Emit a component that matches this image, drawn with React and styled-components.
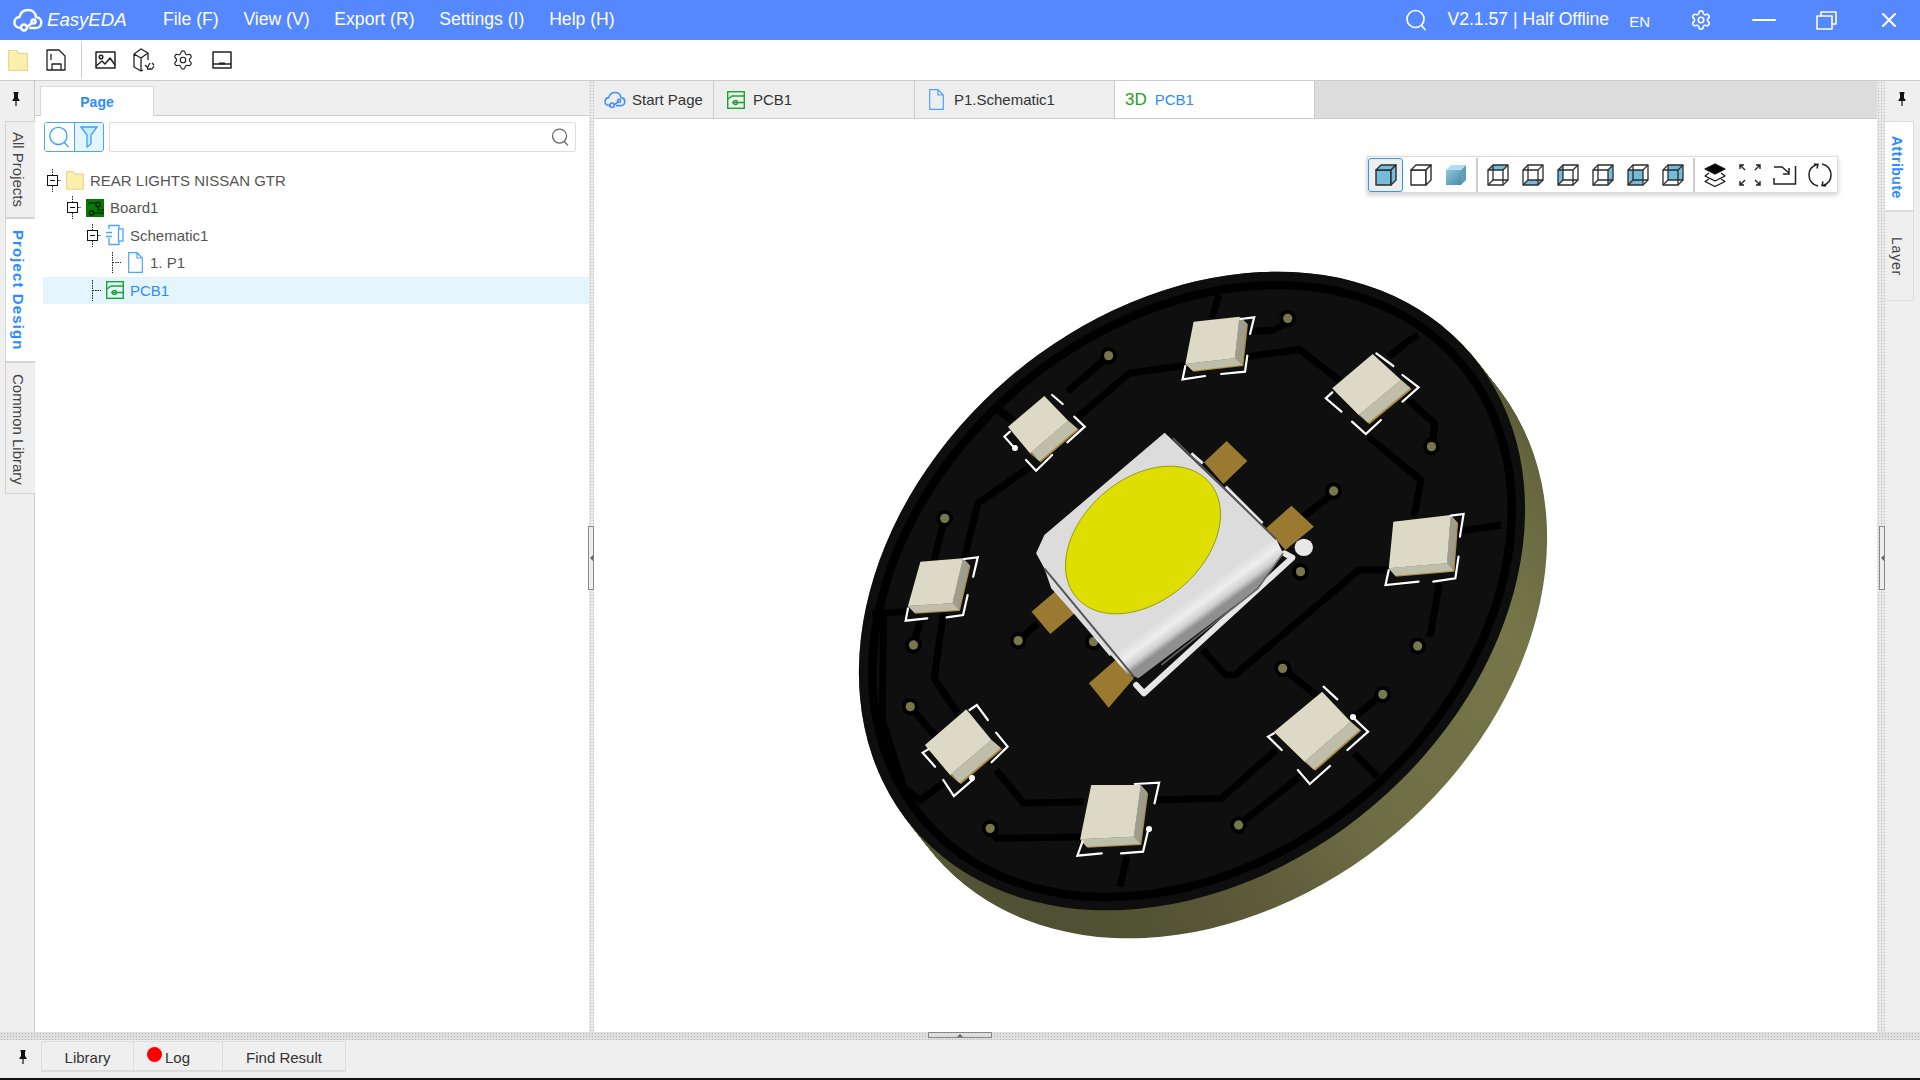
import React from 'react';
import styled, { createGlobalStyle } from 'styled-components';
import { Settings } from 'lucide-react';

const Global = createGlobalStyle`
  html, body { margin: 0; padding: 0; height: 100%; overflow: hidden; background: #fff; }
  body { font-family: "Liberation Sans", Arial, sans-serif; color: #333; }
  #root { height: 100vh; }
  * { box-sizing: border-box; }
  svg { display: block; flex: none; }
`;

const Page = styled.div`display: flex; flex-direction: column; height: 1080px; width: 1920px;`;

const TitleBar = styled.header`display: flex; align-items: center; height: 40px; background: #5588ff; color: #fff; flex: none;`;
const Logo = styled.div`display: flex; align-items: center; gap: 4px; width: 150.5px; padding-left: 13px;`;
const LogoText = styled.span`font-size: 18.6px; font-style: italic;`;
const MenuItem = styled.span`padding: 0 12.4px; font-size: 17.6px; line-height: 40px; position: relative; top: -1px;`;
const TitleRight = styled.div`margin-left: auto; display: flex; align-items: center;`;
const Version = styled.span`font-size: 17.6px; margin: 0 20px 0 20px; position: relative; top: -1px;`;
const Lang = styled.span`font-size: 15px; margin-right: 20px; position: relative; top: 1px;`;
const WinCell = styled.div`width: 62.5px; height: 40px; display: flex; align-items: center; justify-content: center;`;

const ToolBar = styled.div`display: flex; align-items: center; height: 41px; background: #fff; border-bottom: 1px solid #ccc; flex: none; padding-left: 8px;`;
const ToolButton = styled.div`width: ${p => p.$w || 39}px; flex: none; display: flex; justify-content: center; margin-left: ${p => p.$ml || 0}px; margin-right: ${p => p.$mr || 0}px;`;
const ToolSep = styled.div`width: 1px; height: 36px; background: #ccc; flex: none;`;

const Workspace = styled.div`flex: 1; display: flex; min-height: 0;`;
const Rail = styled.aside`width: 35px; flex: none; background: #efefef; display: flex; flex-direction: column; border-right: 1px solid #ccc;`;
const RightRailBox = styled.aside`width: 35px; flex: none; background: #efefef; display: flex; flex-direction: column;`;
const PinCell = styled.div`height: 40px; display: flex; align-items: center; justify-content: center; padding-right: ${p => p.$pr || 0}px; padding-bottom: 5px; flex: none;`;
const SideTab = styled.div`
  writing-mode: vertical-rl; height: ${p => p.$h}px; padding-top: ${p => p.$pt}px; padding-right: 4px; font-size: 15px; line-height: 25px;
  margin-left: 5px; margin-right: -1px; width: 31px; flex: none; white-space: nowrap;
  background: ${p => (p.$active ? '#fff' : '#efefef')};
  color: ${p => (p.$active ? '#2a8cff' : '#444')};
  font-weight: ${p => (p.$active ? 700 : 400)};
  letter-spacing: ${p => p.$ls || 0}px;
  border: 1px solid #d4d4d4; border-right: ${p => (p.$active ? '1px solid #fff' : '1px solid #ccc')};
`;
const RightTab = styled.div`
  writing-mode: vertical-rl; height: ${p => p.$h}px; padding-top: ${p => p.$pt}px; padding-right: 4px; width: 29px; font-size: 14px; line-height: 24px; flex: none;
  background: ${p => (p.$active ? '#fff' : '#efefef')};
  color: ${p => (p.$active ? '#2a8cff' : '#444')};
  font-weight: ${p => (p.$active ? 700 : 400)};
  letter-spacing: ${p => p.$ls || 0}px;
  border-right: 1px solid #ddd; border-bottom: 1px solid #ddd; border-top: 1px solid #ddd; white-space: nowrap;
`;

const Panel = styled.section`width: 554px; flex: none; background: #fff; display: flex; flex-direction: column;`;
const PanelTabs = styled.div`height: 35px; background: #efefef; border-bottom: 1px solid #ccc; padding: 5px 0 0 5px; display: flex;`;
const PanelTab = styled.div`width: 114px; height: 30px; background: #fff; border: 1px solid #d8d8d8; border-bottom: none; color: #2a8cff; font-weight: 700; font-size: 14px; display: flex; align-items: center; justify-content: center;`;
const SearchRow = styled.div`display: flex; gap: 5px; padding: 6px 13px 0 9px; height: 36px;`;
const ButtonGroup = styled.div`display: flex; width: 60px; height: 30px; border: 1px solid #48a4ff; border-radius: 3px; overflow: hidden; flex: none;`;
const GroupBtn = styled.div`flex: 1; display: flex; align-items: center; justify-content: center; background: ${p => (p.$on ? '#e5f5fe' : '#fff')}; & + & { border-left: 1px solid #48a4ff; }`;
const SearchInput = styled.div`flex: 1; height: 30px; border: 1px solid #ddd; border-radius: 2px; display: flex; align-items: center; justify-content: flex-end; padding-right: 6px;`;
const Tree = styled.div`margin: 14.5px 0 0 8px;`;
const Row = styled.div`
  height: 27.5px; display: flex; align-items: center; padding-left: ${p => p.$level * 20}px; font-size: 15px;
  background: ${p => (p.$sel ? '#e5f5fe' : 'transparent')}; color: ${p => (p.$sel ? '#2a8cff' : '#555')};
`;
const RowIcon = styled.span`margin: 0 6px 0 5px; width: 18px; display: flex; justify-content: center;`;

const VSplit = styled.div`
  width: ${p => p.$w}px; flex: none; position: relative; background-color: #e8e8e8;
  background-image: radial-gradient(#bdbdbd 0.8px, transparent 0.9px); background-size: 3px 3px;
`;
const VHandle = styled.div`position: absolute; left: ${p => p.$l}px; top: 445px; width: 6px; height: 64px; background: #eee; border: 1px solid #888; display: flex; align-items: center; justify-content: center;
  &::after { content: ''; border: 3px solid transparent; border-right-color: #666; margin-left: -3px; }`;

const Main = styled.main`flex: 1; display: flex; flex-direction: column; min-width: 0;`;
const DocTabs = styled.div`height: 38px; background: #dcdcdc; border-bottom: 1px solid #ccc; display: flex; flex: none;`;
const DocTab = styled.div`
  width: ${p => p.$w}px; display: flex; align-items: center; gap: ${p => p.$gap || 8}px; padding-left: ${p => p.$pl || 10}px; font-size: 15px;
  background: ${p => (p.$active ? '#fff' : '#eee')}; color: ${p => (p.$active ? '#2a8cff' : '#333')};
  border-right: 1px solid #ccc; height: 37px;
`;
const Green3D = styled.span`color: #19a619; font-size: 17px;`;
const Canvas = styled.div`flex: 1; position: relative; background: #fff; min-height: 0;`;
const ViewSvg = styled.svg`width: 100%; height: 100%;`;
const ViewBar = styled.div`
  position: absolute; left: 773px; top: 37px; height: 37px; display: flex; align-items: stretch; background: #fff; padding: 1px 0 0 0;
  border: 1px solid #ddd; box-shadow: 0 2px 5px rgba(0,0,0,.2);
`;
const ViewBtn = styled.div`width: 35px; display: flex; align-items: center; justify-content: center; border-radius: 3px;
  ${p => p.$active ? 'background:#eee; border:1px solid #2a96ff;' : ''}`;
const ViewSep = styled.div`width: 2px; background: #ccc; margin: 0 2.5px;`;

const HSplit = styled.div`
  height: 8px; flex: none; position: relative; background-color: #dedede;
  background-image: radial-gradient(#b8b8b8 0.8px, transparent 0.9px); background-size: 3px 3px;
`;
const HHandle = styled.div`position: absolute; left: 928px; top: 0; width: 64px; height: 6px; background: #ddd; border: 1px solid #888; display: flex; justify-content: center;
  &::after { content: ''; border: 3px solid transparent; border-bottom-color: #666; margin-top: -3px; }`;
const BottomBar = styled.footer`height: 38px; background: #efefef; flex: none; display: flex; align-items: flex-start;`;
const BottomPin = styled.div`width: 41px; height: 32px; padding: 2px 0 0 5px; display: flex; align-items: center; justify-content: center;`;
const BottomTabs = styled.div`display: flex; height: 31px; margin-top: 1px; border: 1px solid #ddd; border-bottom: 2px solid #ddd;`;
const BottomTab = styled.div`width: ${p => p.$w}px; display: flex; align-items: center; justify-content: ${p => p.$start ? 'flex-start' : 'center'}; gap: 3px; padding: 2px 0 0 ${p => p.$start ? 13 : 0}px; font-size: 15px; color: #333; & + & { border-left: 1px solid #ddd; }`;
const RedDot = styled.span`width: 15px; height: 15px; border-radius: 50%; background: #ff0000; margin-top: -5px;`;
const BlackEdge = styled.div`height: 2px; background: #111; flex: none;`;

/* ---------- icons ---------- */
const CloudLogo = ({ c = '#fff', s = 30, w = 2.4 }) => (
  <svg width={s} height={s * 0.8} viewBox="0 0 30 24" fill="none" stroke={c} strokeWidth={w} strokeLinecap="round">
    <path d="M8 20C3 20 1 17 1.5 13.5 2 10.5 4.5 9 6.5 9 7.5 4.5 11 2 15 2c4.5 0 7.5 3 8 7 3.5.3 5.5 3 5.3 6-.3 3.4-3 5-6 5h-5" />
    <circle cx="11" cy="19.5" r="3" />
    <path d="M14 19l5-4" />
    <circle cx="20.5" cy="13.5" r="2" />
  </svg>
);
const Pin = () => (
  <svg width="10" height="14" viewBox="0 0 10 14" fill="#111">
    <path d="M2.5 0h5v1L7 2v4l1.5 2v1h-7V8L3 6V2l-.5-1z" />
    <rect x="4.4" y="9" width="1.2" height="5" />
  </svg>
);
const Mag = ({ s = 18, c = '#666', w = 1.4 }) => (
  <svg width={s} height={s} viewBox="0 0 20 20" fill="none" stroke={c} strokeWidth={w} strokeLinecap="round">
    <circle cx="9.5" cy="9" r="7.8" />
    <path d="M14.8 15l3.7 4" />
  </svg>
);
const Funnel = () => (
  <svg width="18" height="22" viewBox="0 0 18 22" fill="none" stroke="#3aa0ff" strokeWidth="1.3">
    <path d="M1 1h16l-6 8v9l-4 3V9z" fill="#c9ecfd" />
  </svg>
);
const FolderIcon = ({ w = 20, h = 22 }) => (
  <svg width={w} height={h} viewBox="0 0 20 22">
    <path d="M.7 1.5h7l2.5 3H19.3v16.8H.7z" fill="#fdf0ac" stroke="#e6d68e" strokeWidth="1.2" />
  </svg>
);
const BoardIcon = () => (
  <svg width="18" height="18" viewBox="0 0 18 18" fill="none">
    <rect width="18" height="18" fill="#037803" />
    <g stroke="#0c0c0c" strokeWidth="1.1">
      <circle cx="12" cy="5.5" r="2.2" />
      <circle cx="5.5" cy="14" r="2.2" />
      <path d="M2 4h8M8 14h10M12 8v3l6 0" />
    </g>
  </svg>
);
const SchemIcon = () => (
  <svg width="18" height="22" viewBox="0 0 18 22" fill="none" stroke="#4aa3ff" strokeWidth="1.3">
    <path d="M3 5V1.5h10V5M3 14v6.5h10V17" />
    <rect x="12.5" y="5" width="4.5" height="12" />
    <path d="M0 8.5h6M0 12.5h6" />
  </svg>
);
const FileIcon = ({ w = 15, h = 21 }) => (
  <svg width={w} height={h} viewBox="0 0 15 21" fill="none" stroke="#4aa3ff" strokeWidth="1.2">
    <path d="M.7.7H9L14.3 6v14.3H.7zM9 .7V6h5.3" />
  </svg>
);
const PcbIcon = ({ s = 18 }) => (
  <svg width={s} height={s} viewBox="0 0 18 18" fill="none" stroke="#1aa531" strokeWidth="1.4">
    <rect x=".7" y=".7" width="16.6" height="16.6" />
    <path d="M1 8l4-3h12M5 11.5h13" />
    <circle cx="8.5" cy="11.5" r="2" />
  </svg>
);
const Toggle = ({ leaf }) => (
  <svg width="18" height="27" viewBox="0 0 18 27" fill="none">
    {leaf ? (
      <path d="M9.5 3v21M9.5 13.5h10" stroke="#222" strokeDasharray="1.5 1" />
    ) : (
      <g>
        <path d="M9.5 2v6M9.5 19v6M15 13.5h4" stroke="#222" strokeDasharray="1.5 1" />
        <rect x="4.5" y="8.5" width="10" height="10" stroke="#111" fill="#fff" />
        <path d="M7 13.5h5" stroke="#111" />
      </g>
    )}
  </svg>
);

const WHITE = { fill: 'none', stroke: '#fff', strokeLinecap: 'round', strokeLinejoin: 'round' };
const TitleSearch = () => (
  <svg width="22" height="22" viewBox="0 0 22 22" {...WHITE} strokeWidth="1.7"><circle cx="10.5" cy="10" r="8.5" /><path d="M16.5 16.5l3.5 4" /></svg>
);
const Minimize = () => <svg width="24" height="4" viewBox="0 0 24 4" {...WHITE} strokeWidth="2"><path d="M1 2h22" /></svg>;
const Restore = () => (
  <svg width="21" height="19" viewBox="0 0 21 19" {...WHITE} strokeWidth="1.6"><rect x="1" y="5" width="15" height="13" /><path d="M5 5V1h15v12h-4" /></svg>
);
const Close = () => <svg width="16" height="16" viewBox="0 0 16 16" {...WHITE} strokeWidth="2"><path d="M2 2l12 12M14 2L2 14" /></svg>;

const DARK = { fill: 'none', stroke: '#222', strokeWidth: 1.3, strokeLinejoin: 'round' };
const SaveIcon = () => (
  <svg width="20" height="22" viewBox="0 0 20 22" {...DARK}><path d="M1 1h12l6 6v14H1zM6 21v-6h9v6M5 5v6" /></svg>
);
const ImageIcon = () => (
  <svg width="21" height="18" viewBox="0 0 21 18" {...DARK} strokeWidth="1.5"><rect x="1" y="1" width="19" height="16" /><circle cx="6" cy="6" r="1.8" /><path d="M1 15l6-5 3 3 5-6 5 7" /></svg>
);
const CubeSwap = () => (
  <svg width="22" height="24" viewBox="0 0 22 24" {...DARK}><path d="M1 6l7-5 7 4v7M1 6v13l7 4v-13M1 6l7 4 7-5M8 23l2-1" /><path d="M12 17l2.5 2.5L17 15M21 17l-2-2M14 21h5l2-3" /></svg>
);
const PanelIcon = () => (
  <svg width="20" height="18" viewBox="0 0 20 18" {...DARK} strokeWidth="1.5"><rect x="1" y="1" width="18" height="16" /><path d="M1 13h18" /><path d="M7 12.5h6" strokeWidth="2" /></svg>
);
const YellowFolder = () => (
  <svg width="20" height="22" viewBox="0 0 20 22"><path d="M.7 1.5h8l2 3h8.6v16.8H.7z" fill="#fdf0ac" stroke="#e6d68e" strokeWidth="1.2" /></svg>
);

const FACES = {
  front: '1,6 16,6 16,21 1,21',
  back: '6,1 21,1 21,16 6,16',
  top: '1,6 6,1 21,1 16,6',
  bottom: '1,21 6,16 21,16 16,21',
  left: '1,6 6,1 6,16 1,21',
  right: '16,6 21,1 21,16 16,21',
};
const BLUE = '#74bcdc';
const CubeWire = ({ face }) => (
  <svg width="22" height="22" viewBox="0 0 22 22" fill="none" stroke="#2c2c2c" strokeWidth="1.3" strokeLinejoin="round">
    <polygon points={FACES[face]} fill={BLUE} stroke="none" />
    <polygon points={FACES.back} />
    <polygon points={FACES.front} />
    <path d="M1 6l5-5M16 6l5-5M1 21l5-5M16 21l5-5" />
  </svg>
);
const CubeSolid = ({ filled }) => (
  <svg width="22" height="22" viewBox="0 0 22 22" fill={filled ? BLUE : '#fff'} stroke="#2c2c2c" strokeWidth="1.4" strokeLinejoin="round">
    <polygon points={FACES.front} />
    <polygon points={FACES.top} />
    <polygon points={FACES.right} />
  </svg>
);
const CubeShaded = () => (
  <svg width="22" height="22" viewBox="0 0 22 22">
    <defs>
      <linearGradient id="cubeFront" x1="0" y1="0" x2="1" y2="1"><stop offset="0" stopColor="#8ccae0" /><stop offset="1" stopColor="#4e87a3" /></linearGradient>
    </defs>
    <polygon points={FACES.front} fill="url(#cubeFront)" />
    <polygon points={FACES.top} fill="#b4def0" />
    <polygon points={FACES.right} fill="#5f9db8" />
  </svg>
);
const LayersIcon = () => (
  <svg width="24" height="24" viewBox="0 0 24 24" fill="none" stroke="#111" strokeWidth="1.2" strokeLinejoin="round">
    <path d="M12 1l10 5-10 5L2 6z" fill="#000" />
    <path d="M6 10l-4 3 10 5 10-5-4-3" />
    <path d="M6 16l-4 2.5 10 5 10-5L18 16" />
  </svg>
);
const FullIcon = () => (
  <svg width="22" height="22" viewBox="0 0 22 22" fill="none" stroke="#222" strokeWidth="1.4">
    <path d="M1 5V1h4M1 1l5 5M21 5V1h-4M21 1l-5 5M1 17v4h4M1 21l5-5M21 17v4h-4M21 21l-5-5" />
  </svg>
);
const FitIcon = () => (
  <svg width="24" height="20" viewBox="0 0 24 20" fill="none" stroke="#222" strokeWidth="1.5">
    <path d="M1 2h8l7 6M16 3v6h-6M22.5 1v18H1v-6" />
  </svg>
);
const RotateIcon = () => (
  <svg width="24" height="24" viewBox="0 0 24 24" fill="none" stroke="#222" strokeWidth="1.5">
    <path d="M10 23C4 22 1 17 1 12S4 3 9 1.5M6 1l4 .5-1 4M14 1c6 1 9 6 9 11s-3 9-8 10.5M18 23l-4-.5 1-4" />
  </svg>
);

/* ---------- 3D board ---------- */
const CX = 1192, CY = 591, RX = 366, RY = 281, TILT = -40.3;
const SWEEP = Array.from({ length: 31 }, (_, i) => (30 - i) / 30);

const Disc = ({ x = CX, y = CY, rx = RX, ry = RY, ...rest }) => (
  <ellipse cx={x} cy={y} rx={rx} ry={ry} transform={`rotate(${TILT} ${x} ${y})`} {...rest} />
);

const TR = { fill: 'none', stroke: '#000', strokeLinejoin: 'round', vectorEffect: 'non-scaling-stroke' };
const Trace = ({ d, w = 7 }) => <path d={d} {...TR} strokeWidth={w} />;
const Via = ({ x, y }) => (
  <g>
    <ellipse cx={x} cy={y} rx="18" ry="26" fill="#000" />
    <ellipse cx={x} cy={y} rx="10" ry="14" fill="#77774c" />
  </g>
);
const P = (pts) => pts.map(([x, y]) => `${x},${y}`).join(' ');
const Led = ({ t, e, silk, diag }) => {
  const [, b, c, d] = t;
  const o = (p, k = 1) => [p[0] + e[0] * k, p[1] + e[1] * k];
  return (
    <g>
      <polygon points={P([b, o(b, 1.15), o(c, 1.15), o(d, 1.15), d, c])} fill="#a58a3c" />
      <polygon points={P([b, c, o(c), o(b)])} fill={diag ? '#bfbeaa' : '#9d9c8d'} />
      <polygon points={P([c, d, o(d), o(c)])} fill={diag ? '#8e7d3d' : '#bfbeaa'} />
      <polygon points={P(t)} fill="#dcd9c6" />
      {silk.map((s, i) => (
        <polyline key={i} points={P(s)} fill="none" stroke="#fff" strokeWidth="2.2" strokeLinecap="round" vectorEffect="non-scaling-stroke" />
      ))}
    </g>
  );
};

const LEDS_UP = [
  { t: [[770, 185], [870, 170], [860, 295], [752, 312]], e: [16, 20], silk: [[[872, 177], [902, 172], [893, 222]], [[752, 318], [746, 358], [795, 348]], [[830, 342], [882, 335], [887, 287]]] },
  { diag: true, t: [[1160, 282], [1222, 360], [1130, 465], [1072, 385]], e: [20, 24], silk: [[[1168, 280], [1205, 318]], [[1225, 345], [1260, 382], [1225, 425]], [[1115, 485], [1145, 522], [1178, 480]], [[1072, 397], [1058, 415], [1092, 455]]] },
  { diag: true, t: [[445, 408], [497, 482], [414, 580], [366, 500]], e: [20, 24], silk: [[[462, 405], [485, 432]], [[510, 470], [533, 500], [495, 547]], [[405, 600], [427, 632], [462, 585]], [[370, 515], [358, 530], [382, 567]]] },
  { t: [[1205, 785], [1330, 765], [1322, 910], [1195, 925]], e: [14, 22], silk: [[[1330, 767], [1358, 762], [1350, 830]], [[1195, 930], [1188, 975], [1260, 965]], [[1292, 965], [1340, 955], [1347, 890]]] },
  { t: [[175, 905], [268, 895], [245, 1030], [148, 1038]], e: [14, 20], silk: [[[270, 897], [300, 892], [290, 950]], [[148, 1045], [143, 1082], [190, 1075]], [[232, 1072], [268, 1065], [278, 1005]]] },
];
const LEDS_LOW = [
  { diag: true, t: [[275, 388], [330, 480], [240, 585], [185, 495]], e: [20, 24], silk: [[[282, 390], [298, 375], [322, 420]], [[340, 458], [365, 500], [330, 547]], [[225, 600], [248, 648], [290, 598]], [[192, 508], [180, 518], [207, 560]]] },
  { t: [[547, 615], [655, 615], [640, 770], [523, 778]], e: [14, 22], silk: [[[642, 612], [695, 608], [685, 670]], [[528, 785], [517, 827], [570, 820]], [[612, 820], [660, 815], [672, 745]]] },
  { diag: true, t: [[1050, 335], [1112, 425], [1012, 545], [945, 455]], e: [20, 24], silk: [[[1053, 320], [1083, 358]], [[1115, 410], [1150, 455], [1105, 510]], [[997, 570], [1023, 612], [1067, 558]], [[945, 460], [932, 470], [962, 510]]] },
];

const Board = () => (
  <ViewSvg viewBox="594 119 1283 913" preserveAspectRatio="none">
    <defs>
      <linearGradient id="edge" gradientUnits="userSpaceOnUse" x1="1540" y1="470" x2="980" y2="880">
        <stop offset="0" stopColor="#4f4f33" />
        <stop offset=".22" stopColor="#67673f" />
        <stop offset=".45" stopColor="#76764a" />
        <stop offset=".75" stopColor="#6f6f46" />
        <stop offset="1" stopColor="#4f4f33" />
      </linearGradient>
      <linearGradient id="chip" gradientUnits="userSpaceOnUse" x1="1090" y1="470" x2="1245" y2="625">
        <stop offset="0" stopColor="#dcdcdc" />
        <stop offset=".7" stopColor="#dcdcdc" />
        <stop offset=".83" stopColor="#eeeeee" />
        <stop offset=".93" stopColor="#cfcfcf" />
        <stop offset="1" stopColor="#8f8f8f" />
      </linearGradient>
    </defs>
    {SWEEP.map(k => <Disc key={k} x={CX + 22 * k} y={CY + 28 * k} fill="url(#edge)" />)}
    <Disc fill="#0e0e0e" />
    <Disc rx={RX - 13.5} ry={RY - 13.5} fill="#0f0f0f" stroke="#000" strokeWidth="8.5" />

    <g transform="translate(840 260) scale(0.4592 0.33333)">
      <Trace d="M510 480L630 340L1000 268L1110 385" />
      <Trace d="M1150 530L1265 660L1250 770" />
      <Trace d="M415 620L300 730L270 900" />
      <Trace d="M825 105L810 175" />
      <Trace d="M970 190L945 210L890 215" />
      <Trace d="M575 300L495 395" />
      <Trace d="M1260 225L1240 240L1195 290" />
      <Trace d="M1230 410L1295 490L1290 555" />
      <Trace d="M345 450L385 490" w={8} />
      <Trace d="M1065 710L1000 780" />
      <Trace d="M225 790L205 900" />
      <Trace d="M1340 815L1440 795" />
      <Trace d="M1195 930L1130 930L860 1245L840 1245L790 1170" />
      <Via x="975" y="175" /><Via x="585" y="287" /><Via x="1288" y="560" /><Via x="1075" y="693" /><Via x="228" y="775" /><Via x="1003" y="935" />
      <g transform="translate(0 960)">
        <Trace d="M1305 10L1285 170" />
        <Trace d="M70 100L150 95" />
        <Trace d="M225 100L205 295L330 550" />
        <Trace d="M340 570L400 670L530 665" />
        <Trace d="M690 660L830 655L950 510" />
        <Trace d="M964 265L1060 370" />
        <Trace d="M1182 343L1120 410" />
        <Trace d="M868 735L1010 580" />
        <Trace d="M327 745L340 775L525 770" />
        <Trace d="M153 380L215 480" />
        <Trace d="M160 195L175 120" />
        <Trace d="M388 182L430 130" />
        <Trace d="M1120 520L1170 590" />
        <Trace d="M625 830L610 920" />
        <Trace d="M225 610L175 660L140 625L92 420L95 100" />
        <Via x="160" y="195" /><Via x="388" y="182" /><Via x="552" y="185" /><Via x="1258" y="198" /><Via x="964" y="265" /><Via x="1182" y="343" /><Via x="153" y="380" /><Via x="868" y="735" /><Via x="327" y="745" />
      </g>

      <polygon points="842,543 887,603 835,672 793,607" fill="#997a30" />
      <polygon points="983,737 1032,800 970,870 928,805" fill="#997a30" />
      <polygon points="468,995 515,1055 458,1122 417,1055" fill="#997a30" />
      <polygon points="600,1200 640,1255 585,1343 542,1270" fill="#997a30" />

      <polyline points="765,580 790,610" fill="none" stroke="#e8e8e8" strokeWidth="3" vectorEffect="non-scaling-stroke" />
      <polyline points="840,680 920,790" fill="none" stroke="#e8e8e8" strokeWidth="3" vectorEffect="non-scaling-stroke" />
      <polyline points="520,1070 590,1185" fill="none" stroke="#e8e8e8" strokeWidth="3" vectorEffect="non-scaling-stroke" />
      <polyline points="968,880 985,893 662,1300 645,1275" fill="none" stroke="#e6e6e6" strokeWidth="6" strokeLinejoin="round" strokeLinecap="round" vectorEffect="non-scaling-stroke" />
      <ellipse cx="1010" cy="862" rx="20" ry="26" fill="#e8e8e8" />

      <polygon points="707,518 950,838 965,880 910,985 650,1255 625,1240 460,985 445,925 427,880 445,825" fill="url(#chip)" />
      <polyline points="725,535 950,838" fill="none" stroke="#555" strokeWidth="2" vectorEffect="non-scaling-stroke" />
      <polyline points="445,925 640,1250" fill="none" stroke="#555" strokeWidth="2" vectorEffect="non-scaling-stroke" />
      <polyline points="965,880 910,985 700,1215" fill="none" stroke="#666" strokeWidth="1.6" vectorEffect="non-scaling-stroke" />
    </g>

    <ellipse cx="1143" cy="540" rx="88" ry="61" transform="rotate(-41 1143 540)" fill="#dede00" stroke="#8f8f10" strokeWidth=".8" />

    <g transform="translate(840 260) scale(0.4592 0.33333)">
      {LEDS_UP.map((l, i) => <Led key={i} {...l} />)}
      <g transform="translate(0 960)">
        {LEDS_LOW.map((l, i) => <Led key={i} {...l} />)}
      </g>
    </g>
    <circle cx="1015" cy="448" r="3" fill="#fff" />
    <circle cx="972" cy="778" r="3" fill="#fff" />
    <circle cx="1149" cy="829" r="3" fill="#fff" />
    <circle cx="1353" cy="717" r="3" fill="#fff" />
  </ViewSvg>
);

const WIRE_FACES = ['top', 'bottom', 'left', 'right', 'front', 'back'];

export default function App() {
  return (
    <Page>
      <Global />
      <TitleBar>
        <Logo><CloudLogo /><LogoText>EasyEDA</LogoText></Logo>
        {['File (F)', 'View (V)', 'Export (R)', 'Settings (I)', 'Help (H)'].map(m => <MenuItem key={m}>{m}</MenuItem>)}
        <TitleRight>
          <TitleSearch />
          <Version>V2.1.57 | Half Offline</Version>
          <Lang>EN</Lang>
          <WinCell><Settings size={22} strokeWidth={1.7} /></WinCell>
          <WinCell><Minimize /></WinCell>
          <WinCell><Restore /></WinCell>
          <WinCell><Close /></WinCell>
        </TitleRight>
      </TitleBar>

      <ToolBar>
        <ToolButton $w={20}><YellowFolder /></ToolButton>
        <ToolButton $ml={8.5} $mr={5.5}><SaveIcon /></ToolButton>
        <ToolSep />
        <ToolButton $ml={3.5}><ImageIcon /></ToolButton>
        <ToolButton><CubeSwap /></ToolButton>
        <ToolButton><Settings size={22} strokeWidth={1.3} color="#222" /></ToolButton>
        <ToolButton><PanelIcon /></ToolButton>
      </ToolBar>

      <Workspace>
        <Rail>
          <PinCell $pr={2}><Pin /></PinCell>
          <SideTab $h={97} $pt={10}>All Projects</SideTab>
          <SideTab $h={144} $pt={11} $active $ls={1.1}>Project Design</SideTab>
          <SideTab $h={132} $pt={11}>Common Library</SideTab>
        </Rail>

        <Panel>
          <PanelTabs><PanelTab>Page</PanelTab></PanelTabs>
          <SearchRow>
            <ButtonGroup>
              <GroupBtn><Mag s={22} c="#3aa0ff" w={1.2} /></GroupBtn>
              <GroupBtn $on><Funnel /></GroupBtn>
            </ButtonGroup>
            <SearchInput><Mag s={18} /></SearchInput>
          </SearchRow>
          <Tree>
            <Row $level={0}><Toggle /><RowIcon><FolderIcon w={18} h={20} /></RowIcon>REAR LIGHTS NISSAN GTR</Row>
            <Row $level={1}><Toggle /><RowIcon><BoardIcon /></RowIcon>Board1</Row>
            <Row $level={2}><Toggle /><RowIcon><SchemIcon /></RowIcon>Schematic1</Row>
            <Row $level={3}><Toggle leaf /><RowIcon><FileIcon /></RowIcon>1. P1</Row>
            <Row $level={2} $sel><Toggle leaf /><RowIcon><PcbIcon /></RowIcon>PCB1</Row>
          </Tree>
        </Panel>

        <VSplit $w={5}><VHandle $l={-1} /></VSplit>

        <Main>
          <DocTabs>
            <DocTab $w={120} $gap={6}><CloudLogo c="#4a90ff" s={22} w={2.2} />Start Page</DocTab>
            <DocTab $w={201} $pl={13}><PcbIcon />PCB1</DocTab>
            <DocTab $w={200} $pl={14} $gap={10}><FileIcon />P1.Schematic1</DocTab>
            <DocTab $w={200} $active><Green3D>3D</Green3D>PCB1</DocTab>
          </DocTabs>
          <Canvas>
            <Board />
            <ViewBar>
              <ViewBtn $active><CubeSolid filled /></ViewBtn>
              <ViewBtn><CubeSolid /></ViewBtn>
              <ViewBtn><CubeShaded /></ViewBtn>
              <ViewSep />
              {WIRE_FACES.map(f => <ViewBtn key={f}><CubeWire face={f} /></ViewBtn>)}
              <ViewSep />
              <ViewBtn><LayersIcon /></ViewBtn>
              <ViewBtn><FullIcon /></ViewBtn>
              <ViewBtn><FitIcon /></ViewBtn>
              <ViewBtn><RotateIcon /></ViewBtn>
            </ViewBar>
          </Canvas>
        </Main>

        <VSplit $w={8}><VHandle $l={2} /></VSplit>

        <RightRailBox>
          <PinCell $pr={1}><Pin /></PinCell>
          <RightTab $active $h={90} $pt={14} $ls={0.5}>Attribute</RightTab>
          <RightTab $h={90} $pt={25} $ls={0.8}>Layer</RightTab>
        </RightRailBox>
      </Workspace>

      <HSplit><HHandle /></HSplit>
      <BottomBar>
        <BottomPin><Pin /></BottomPin>
        <BottomTabs>
          <BottomTab $w={91}>Library</BottomTab>
          <BottomTab $w={89} $start><RedDot />Log</BottomTab>
          <BottomTab $w={123}>Find Result</BottomTab>
        </BottomTabs>
      </BottomBar>
      <BlackEdge />
    </Page>
  );
}
